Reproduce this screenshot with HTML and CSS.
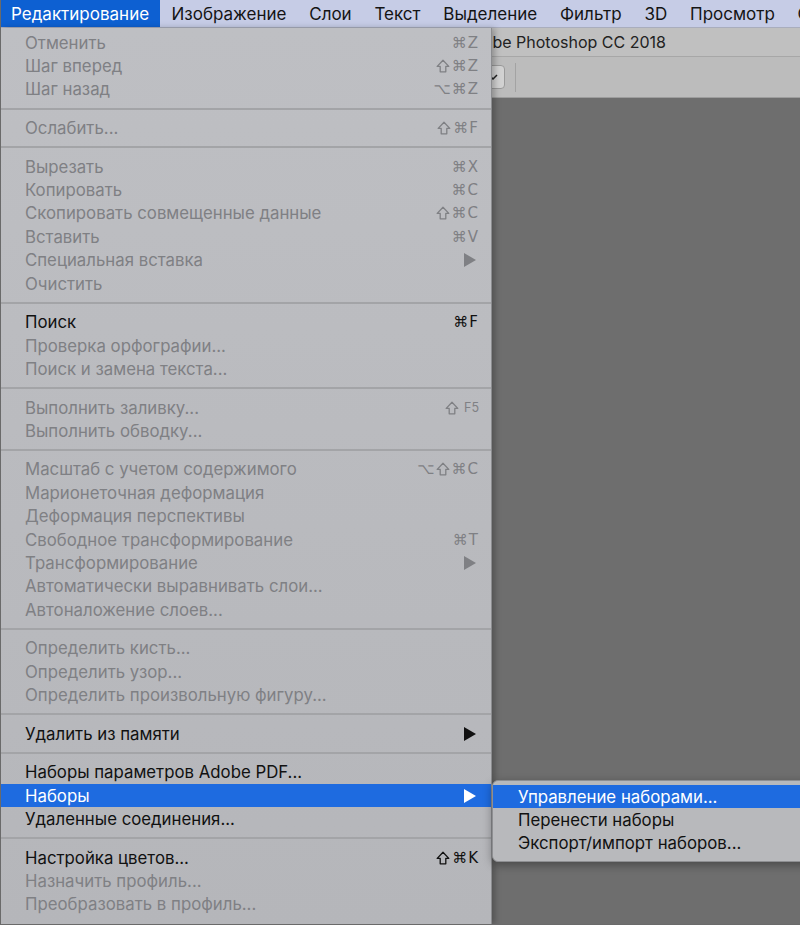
FILE: index.html
```html
<!DOCTYPE html>
<html lang="ru">
<head>
  <meta charset="UTF-8" />
  <title>Редактирование</title>
  <link rel="stylesheet" href="styles.css">
</head>
<body>

<div class="screen">
  <div class="menubar">
    <span class="mb-item active">Редактирование</span>
    <span class="mb-item">Изображение</span>
    <span class="mb-item">Слои</span>
    <span class="mb-item">Текст</span>
    <span class="mb-item">Выделение</span>
    <span class="mb-item">Фильтр</span>
    <span class="mb-item">3D</span>
    <span class="mb-item">Просмотр</span>
    <span class="mb-item">Окно</span>
  </div>

  <div class="app">
    <div class="titlebar">
      <div class="title-clip"><span class="title">Adobe Photoshop CC 2018</span></div>
    </div>
    <div class="toolbar">
      <div class="select">
        <svg width="10" height="6" viewBox="0 0 10 6"><path d="M1 1l4 4 4-4" fill="none" stroke="#222" stroke-width="1.5"/></svg>
      </div>
      <div class="vline"></div>
    </div>
    <div class="canvas"></div>
  </div>

  <div class="menu">
    <div class="item off"><span>Отменить</span><span class="key">⌘Z</span></div>
    <div class="item off"><span>Шаг вперед</span><span class="key"><svg class="shift" viewBox="0 0 14 14"><path d="M7 1.2L12.8 7.4H9.8V12.8H4.2V7.4H1.2Z"/></svg>⌘Z</span></div>
    <div class="item off"><span>Шаг назад</span><span class="key">⌥⌘Z</span></div>
    <div class="sep"></div>
    <div class="item off"><span>Ослабить...</span><span class="key"><svg class="shift" viewBox="0 0 14 14"><path d="M7 1.2L12.8 7.4H9.8V12.8H4.2V7.4H1.2Z"/></svg>⌘F</span></div>
    <div class="sep"></div>
    <div class="item off"><span>Вырезать</span><span class="key">⌘X</span></div>
    <div class="item off"><span>Копировать</span><span class="key">⌘C</span></div>
    <div class="item off"><span>Скопировать совмещенные данные</span><span class="key"><svg class="shift" viewBox="0 0 14 14"><path d="M7 1.2L12.8 7.4H9.8V12.8H4.2V7.4H1.2Z"/></svg>⌘C</span></div>
    <div class="item off"><span>Вставить</span><span class="key">⌘V</span></div>
    <div class="item off"><span>Специальная вставка</span><span class="arrow"></span></div>
    <div class="item off"><span>Очистить</span></div>
    <div class="sep"></div>
    <div class="item"><span>Поиск</span><span class="key">⌘F</span></div>
    <div class="item off"><span>Проверка орфографии...</span></div>
    <div class="item off"><span>Поиск и замена текста...</span></div>
    <div class="sep"></div>
    <div class="item off"><span>Выполнить заливку...</span><span class="key"><svg class="shift" viewBox="0 0 14 14"><path d="M7 1.2L12.8 7.4H9.8V12.8H4.2V7.4H1.2Z"/></svg><small>F5</small></span></div>
    <div class="item off"><span>Выполнить обводку...</span></div>
    <div class="sep"></div>
    <div class="item off"><span>Масштаб с учетом содержимого</span><span class="key">⌥<svg class="shift" viewBox="0 0 14 14"><path d="M7 1.2L12.8 7.4H9.8V12.8H4.2V7.4H1.2Z"/></svg>⌘C</span></div>
    <div class="item off"><span>Марионеточная деформация</span></div>
    <div class="item off"><span>Деформация перспективы</span></div>
    <div class="item off"><span>Свободное трансформирование</span><span class="key">⌘T</span></div>
    <div class="item off"><span>Трансформирование</span><span class="arrow"></span></div>
    <div class="item off"><span>Автоматически выравнивать слои...</span></div>
    <div class="item off"><span>Автоналожение слоев...</span></div>
    <div class="sep"></div>
    <div class="item off"><span>Определить кисть...</span></div>
    <div class="item off"><span>Определить узор...</span></div>
    <div class="item off"><span>Определить произвольную фигуру...</span></div>
    <div class="sep"></div>
    <div class="item"><span>Удалить из памяти</span><span class="arrow"></span></div>
    <div class="sep"></div>
    <div class="item"><span>Наборы параметров Adobe PDF...</span></div>
    <div class="item selected"><span>Наборы</span><span class="arrow"></span></div>
    <div class="item"><span>Удаленные соединения...</span></div>
    <div class="sep"></div>
    <div class="item"><span>Настройка цветов...</span><span class="key"><svg class="shift" viewBox="0 0 14 14"><path d="M7 1.2L12.8 7.4H9.8V12.8H4.2V7.4H1.2Z"/></svg>⌘K</span></div>
    <div class="item off"><span>Назначить профиль...</span></div>
    <div class="item off"><span>Преобразовать в профиль...</span></div>
  </div>

  <div class="submenu">
    <div class="item selected"><span>Управление наборами...</span></div>
    <div class="item"><span>Перенести наборы</span></div>
    <div class="item"><span>Экспорт/импорт наборов...</span></div>
  </div>
</div>

</body>
</html>
```

FILE: styles.css
```css
* {
  box-sizing: border-box;
}

body {
  margin: 0;
  padding: 0;
  background: #6e6e6e;
  font-family: 'Inter', 'Noto Sans', sans-serif;
}

.screen {
  position: relative;
  width: 800px;
  height: 925px;
  overflow: hidden;
  border-left: 1px solid #6a6a6a;
  border-bottom: 1px solid #6a6a6a;
}

/* top menu bar */
.menubar {
  display: flex;
  height: 28px;
  align-items: stretch;
  background: #c6cce6;
  border-bottom: 1px solid #a9adbd;
  white-space: nowrap;
}

.mb-item {
  display: flex;
  align-items: center;
  padding: 0 11.4px;
  font-size: 17px;
  color: #141414;
}

.mb-item.active {
  background: #0d60d2;
  color: #fff;
  padding: 0 11px 0 10px;
}

/* photoshop window behind the menu */
.app {
  display: flex;
  flex-direction: column;
  height: 897px;
}

.titlebar {
  height: 29px;
  background: #c0c0c0;
  border-bottom: 1px solid #a7a7a7;
  font-size: 16px;
  line-height: 29px;
  color: #222;
}

.title-clip {
  margin-left: 491px;
  overflow: hidden;
  white-space: nowrap;
}

.title {
  display: inline-block;
  margin-left: -30px;
}

.toolbar {
  height: 41px;
  background: #bcbcbc;
  border-bottom: 1px solid #9d9d9d;
  display: flex;
  align-items: center;
  padding-left: 470px;
}

.select {
  width: 34px;
  height: 24px;
  background: #d2d2d2;
  border: 1px solid #9a9a9a;
  border-radius: 4px;
  display: flex;
  align-items: center;
  justify-content: flex-end;
  padding-right: 6px;
}

.vline {
  width: 1px;
  height: 29px;
  background: #a3a3a3;
  margin-left: 10px;
}

.canvas {
  flex: 1;
  background: #6e6e6e;
}

/* dropdown */
.menu {
  position: absolute;
  left: 0;
  top: 28px;
  width: 491px;
  padding: 3px 0 0;
  bottom: 0;
  background: linear-gradient(#bebfc3, #b5b6ba);
  border-right: 1px solid #8b8c8f;
  box-shadow: 3px 0 6px rgba(0, 0, 0, 0.25);
}

.item {
  display: flex;
  justify-content: space-between;
  align-items: center;
  height: 23.4px;
  padding: 0 12px 0 24px;
  font-size: 16.8px;
  color: #111;
  white-space: nowrap;
}

.item.off {
  color: #7f8084;
}

.item.selected {
  background: #1e6be0;
  color: #fff;
}

.key {
  display: flex;
  align-items: center;
  font-family: 'DejaVu Sans', sans-serif;
  font-size: 15px;
  letter-spacing: 1px;
}

.shift {
  width: 14px;
  height: 14px;
  margin-right: 2px;
  fill: none;
  stroke: currentColor;
  stroke-width: 1.3;
  stroke-linejoin: round;
}

.key small {
  font-family: 'Inter', sans-serif;
  font-size: 12.5px;
  margin-left: 3px;
  letter-spacing: 0;
}

.arrow {
  width: 0;
  height: 0;
  border-left: 12px solid currentColor;
  border-top: 7px solid transparent;
  border-bottom: 7px solid transparent;
  margin-right: 3px;
}

.sep {
  height: 15.2px;
  display: flex;
  align-items: center;
}

.sep::before {
  content: "";
  flex: 1;
  height: 2px;
  background: #a3a4a7;
}

/* submenu */
.submenu {
  position: absolute;
  left: 491px;
  top: 780px;
  width: 320px;
  padding: 4px 0 6px;
  background: #b8b9bc;
  border: 1px solid #8e8f92;
  border-radius: 6px 0 0 6px;
  box-shadow: 0 3px 10px rgba(0, 0, 0, 0.35);
}

.submenu .item {
  padding-left: 25px;
}
```
